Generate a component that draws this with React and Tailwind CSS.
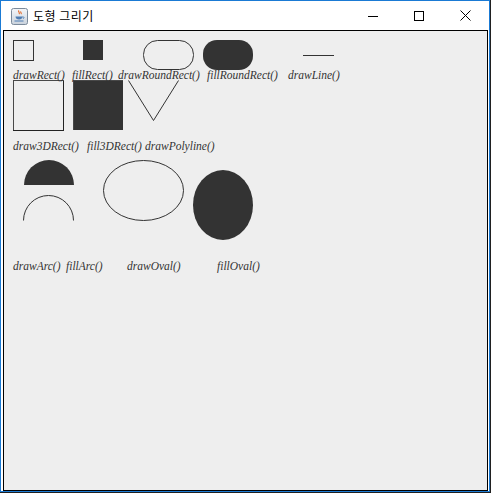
import React from "react";

function JavaIcon() {
  return (
    <svg width="17" height="17" viewBox="0 0 17 17" className="block">
      <defs>
        <linearGradient id="jbg" x1="0" y1="0" x2="0" y2="1">
          <stop offset="0" stopColor="#f4f6f9" />
          <stop offset="1" stopColor="#c9d2dc" />
        </linearGradient>
      </defs>
      <rect x="0.5" y="0.5" width="16" height="16" rx="2" fill="url(#jbg)" stroke="#7b8a9b" />
      <path d="M8 2.5c-1.5 1.5 1.5 2 0 3.5M10 3.5c-1 1 1 1.5 0 2.5" stroke="#e2611b" strokeWidth="1.1" fill="none" />
      <path d="M4.5 8.5h7c0 2-1.5 3-3.5 3s-3.5-1-3.5-3z" fill="#4f7db3" />
      <path d="M11.3 9h1.2c0.8 0 0.8 1.5-0.6 1.6" stroke="#4f7db3" strokeWidth="0.9" fill="none" />
      <path d="M3.5 13h9" stroke="#4f7db3" strokeWidth="1" />
    </svg>
  );
}

function TitleBar() {
  return (
    <div className="h-[29px] flex items-center bg-white shrink-0">
      <div className="ml-[10px] mt-[1px]">
        <JavaIcon />
      </div>
      <span className="ml-[5px] text-[12px] tracking-[0.5px] leading-none text-black" style={{ fontFamily: '"Noto Sans CJK KR", "Noto Sans", sans-serif' }}>
        도형 그리기
      </span>
      <div className="ml-auto flex h-full">
        <button className="w-[46px] h-full flex items-center justify-center">
          <svg width="10" height="10" viewBox="0 0 10 10"><path d="M0 5.5h10" stroke="#000" strokeWidth="1" /></svg>
        </button>
        <button className="w-[46px] h-full flex items-center justify-center">
          <svg width="10" height="10" viewBox="0 0 10 10"><rect x="0.5" y="0.5" width="9" height="9" fill="none" stroke="#000" /></svg>
        </button>
        <button className="w-[46px] h-full flex items-center justify-center mr-[1px]">
          <svg width="11" height="11" viewBox="0 0 11 11"><path d="M0.5 0.5l10 10M10.5 0.5l-10 10" stroke="#000" strokeWidth="1" /></svg>
        </button>
      </div>
    </div>
  );
}

const labelStyle = { fontFamily: '"Liberation Serif", "DejaVu Serif", serif', fontStyle: "italic", fontSize: 11.5 };

function Canvas() {
  const c = "#333333";
  const labels = [
    ["drawRect()", 13, 79],
    ["fillRect()", 72, 79],
    ["drawRoundRect()", 118, 79],
    ["fillRoundRect()", 207, 79],
    ["drawLine()", 288, 79],
    ["draw3DRect()", 13, 150],
    ["fill3DRect()", 87, 150],
    ["drawPolyline()", 145, 150],
    ["drawArc()", 13, 270],
    ["fillArc()", 66, 270],
    ["drawOval()", 127, 270],
    ["fillOval()", 217, 270],
  ];
  return (
    <svg width="483" height="459" viewBox="4 31 483 459" className="block">
      {/* row 1 */}
      <rect x="13.5" y="40.5" width="20" height="20" fill="none" stroke={c} shapeRendering="crispEdges" />
      <rect x="83" y="40" width="20" height="20" fill={c} shapeRendering="crispEdges" />
      <rect x="143.5" y="40.5" width="50" height="29" rx="14" ry="14" fill="none" stroke={c} />
      <rect x="203" y="40" width="50" height="30" rx="14" ry="14" fill={c} />
      <path d="M303 55.5h31" stroke={c} shapeRendering="crispEdges" />

      {/* row 2 */}
      <path d="M13.5 130V80.5H63.5" stroke="#484848" fill="none" shapeRendering="crispEdges" />
      <path d="M63.5 80.5V130.5H13" stroke="#232323" fill="none" shapeRendering="crispEdges" />
      <rect x="73" y="80" width="50" height="50" fill={c} shapeRendering="crispEdges" />
      <path d="M73.5 130V80.5H123" stroke="#484848" fill="none" shapeRendering="crispEdges" />
      <polyline points="128.5,80.5 153.5,120.5 178.5,80.5" fill="none" stroke={c} />

      {/* row 3 */}
      <path d="M24 185A25 25 0 0 1 74 185Z" fill={c} />
      <path d="M23.5 220.5A25 25 0 0 1 73.5 220.5" fill="none" stroke={c} />
      <ellipse cx="143.5" cy="190.5" rx="40" ry="30" fill="none" stroke={c} />
      <ellipse cx="223" cy="205" rx="30" ry="35" fill={c} />

      {labels.map(([t, x, y]) => (
        <text key={t} x={x} y={y} fill={c} style={labelStyle}>
          {t}
        </text>
      ))}
    </svg>
  );
}

export default function App() {
  return (
    <div className="w-[491px] h-[493px] bg-[#202020] overflow-hidden">
      <div className="w-[490px] h-[492px] border border-[#1a7ad4] bg-white flex flex-col">
        <TitleBar />
        <div className="flex-1 ml-[2px] mr-[1px] border border-black bg-[#eeeeee] overflow-hidden">
          <Canvas />
        </div>
      </div>
    </div>
  );
}
